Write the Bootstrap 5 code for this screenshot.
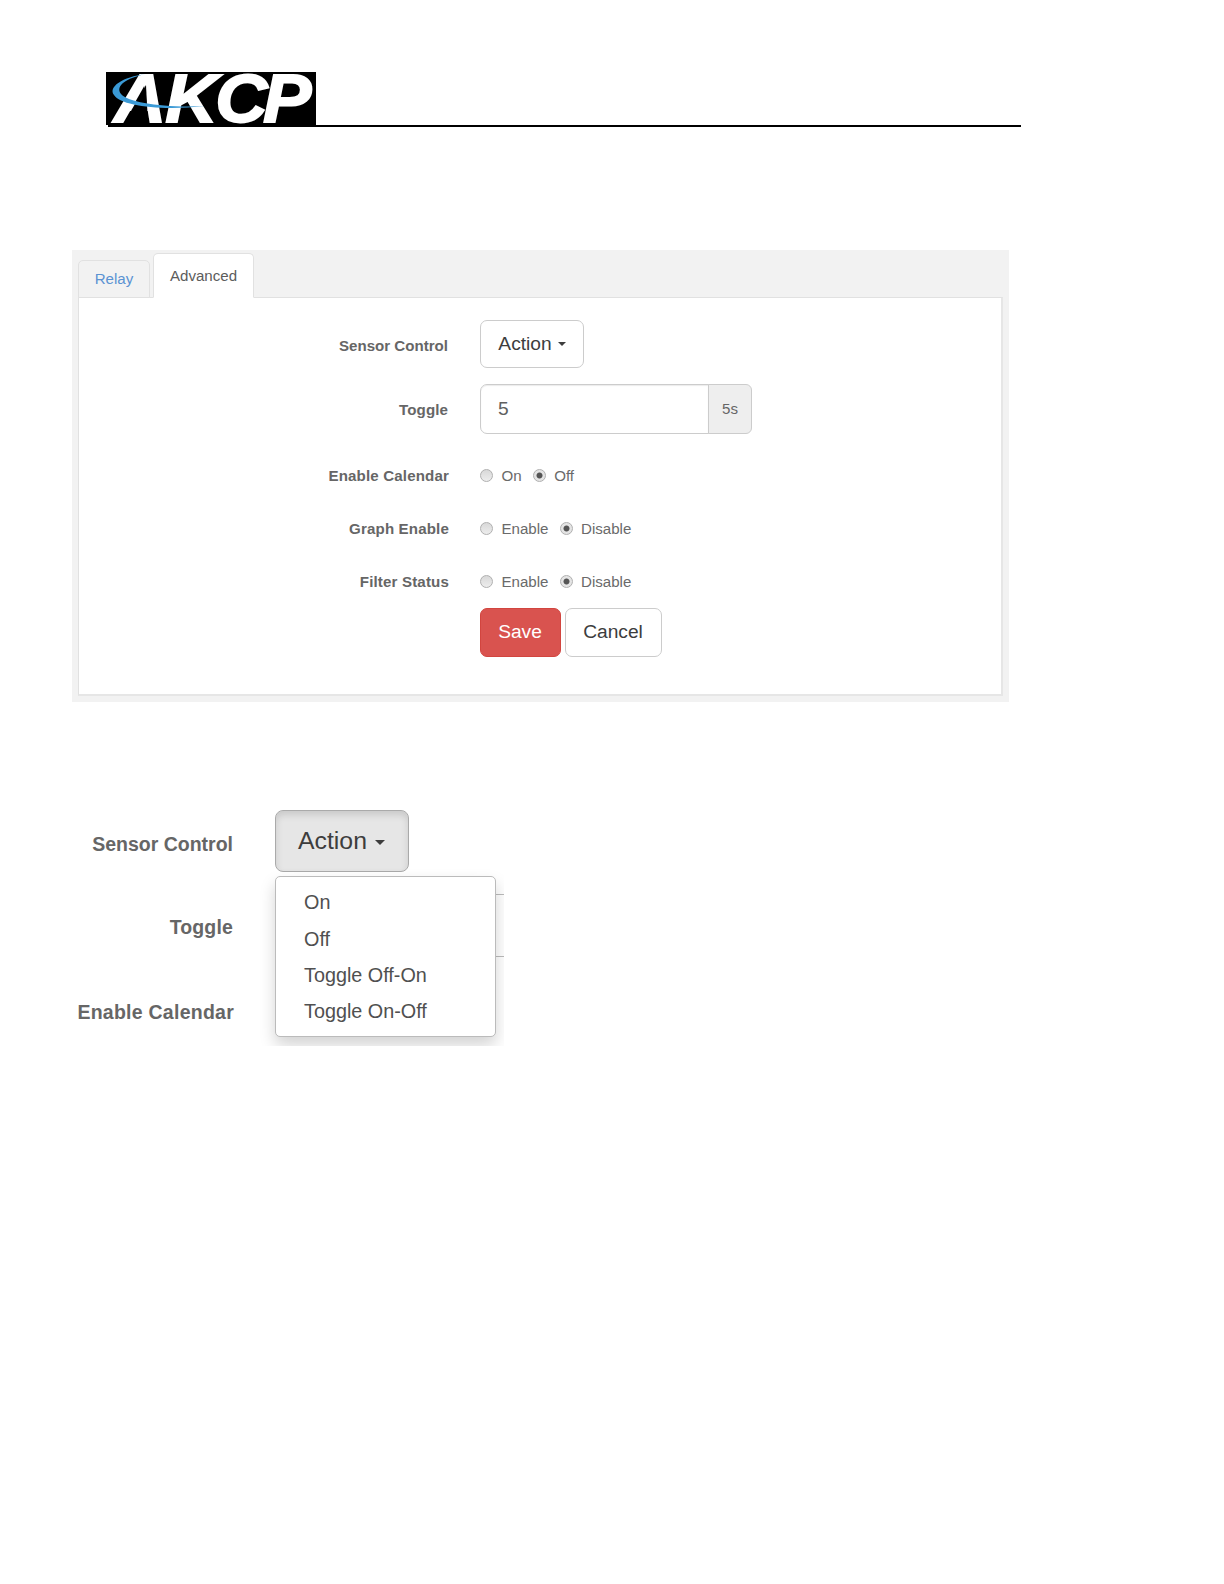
<!DOCTYPE html>
<html lang="en">
<head>
<meta charset="utf-8">
<meta name="viewport" content="width=device-width, initial-scale=1">
<title>AKCP Relay Settings</title>
<link href="https://cdn.jsdelivr.net/npm/bootstrap@5.3.0/dist/css/bootstrap.min.css" rel="stylesheet">
<style>
body{font-family:"Liberation Sans",Arial,sans-serif;font-size:15.1px;line-height:20px;color:#666;background:#fff}
.page{width:1224px;height:1584px;padding:72px 0 0 72px;overflow:hidden}
.brand-bar{width:949px;height:55px;padding-left:34px}
.brand-bar svg{display:block;overflow:visible}
.panel-shot{width:937px;height:452px;margin-top:123px;padding:3px 6px 6px;background:#f2f2f2}
.panel-shot .nav-tabs{height:45px;border:0;position:relative;z-index:1}
.panel-shot .nav-link{border:1px solid #e1e1e1;border-radius:5px 5px 0 0;padding:0;margin:0;text-align:center;color:#5b93d3;background:#f2f2f2;width:72px;height:38px;line-height:36px}
.panel-shot .nav-link.active{width:101px;height:45px;line-height:44px;margin-left:3px;background:#fff;color:#5c5c5c;border-color:#e1e1e1 #e1e1e1 #fff}
.panel-body{height:399px;margin-top:-1px;background:#fff;border:1px solid #e1e1e1;border-right:2px solid #e6e6e6;border-bottom:2px solid #e6e6e6;padding-top:22px}
.field{height:53px}
.field-label{width:369px;margin-right:32px;font-weight:700;text-align:right;flex:none}
.wide-text{letter-spacing:.15px;width:370px;margin-right:31px}
.control-row{height:64px}
.control-row .field-label{padding-top:16px}
.toggle-row{height:65px}
.toggle-row .field-label{padding-top:16px;letter-spacing:.1px}
.btn-big{font-size:19.2px;line-height:25px;border:1px solid #ccc;border-radius:7px;color:#3d3d3d;background:#fff;padding:0 17px 2px;height:48px;display:inline-flex;align-items:center;justify-content:center}
.btn-action{width:104px}
.tri{width:0;height:0;border:4.5px solid transparent;border-top-color:currentColor;border-bottom:0;margin-left:6px;margin-top:2px}
.btn-save{width:81px;height:49px;background:#d9534f;border-color:#d2453f;color:#fff;padding-right:18px}
.btn-cancel{width:97px;height:49px;padding-right:18px}
.toggle-group{width:272px;height:50px}
.toggle-group .form-control{font-size:19.2px;color:#606060;border:1px solid #ccc;border-radius:7px 0 0 7px;padding:0 17px;box-shadow:inset 0 1px 1px rgba(0,0,0,.08)}
.toggle-group .input-group-text{width:44px;padding:0;justify-content:center;font-size:15.1px;color:#666;background:#eee;border:1px solid #ccc;border-radius:0 6px 6px 0}
.opt input{appearance:none;width:13px;height:13px;margin:0 8.5px 0 0;border:1px solid #b0b0b0;border-radius:50%;background:linear-gradient(#d8d8d8,#ededed)}
.opt input:checked{background:radial-gradient(circle,#555 0 2.6px,#e4e4e4 3.4px)}
.opt{color:#6a6a6a}
.opt+.opt{margin-left:11px}
.menu-shot{width:432px;height:246px;margin-top:98px;position:relative;overflow:hidden;font-size:19.5px;line-height:26px}
.menu-shot .field-label{width:161px;margin-right:42px}
.menu-control{height:84px;padding-top:10px}
.menu-control .field-label{padding-top:21px}
.menu-toggle{height:84px}
.menu-shot .menu-toggle .field-label{padding-top:30px;letter-spacing:.15px}
.menu-shot .menu-calendar .field-label{padding-top:31px;width:162px;margin-right:41px;letter-spacing:.25px}
.btn-open{width:134px;height:62px;font-size:24.8px;line-height:32px;border:1px solid #aaa;border-radius:8px;background:#e6e6e6;color:#3d3d3d;box-shadow:inset 0 4px 7px rgba(0,0,0,.125);padding:0 1px 0 0;display:flex;align-items:center;justify-content:center}
.btn-open .tri{border-width:5.5px 5.5px 0;margin-left:8px}
.behind-input{height:63px;margin-top:10px;border:1px solid #bbb;border-right:0;border-radius:4px 0 0 4px;background:#fff}
.behind-radio{width:17px;height:17px;margin-top:35px;border:2px solid #999;border-radius:50%}
.menu-shot .dropdown-menu{left:203px;top:76px;width:221px;min-width:0;height:161px;margin:0;padding:7.4px 0;border:1px solid #bbb;border-radius:5px;box-shadow:0 8px 16px rgba(0,0,0,.175);font-size:19.8px}
.menu-shot .dropdown-item{padding:0 28px;height:36.2px;line-height:36px;color:#505050}
</style>
<script src="https://cdn.jsdelivr.net/npm/bootstrap@5.3.0/dist/js/bootstrap.bundle.min.js"></script>
</head>
<body>
<main class="page">
  <header class="brand-bar">
    <svg width="915" height="55" viewBox="0 0 915 55" role="img" aria-label="AKCP">
      <rect width="210" height="53" fill="#000"/>
      <rect x="2" y="53" width="913" height="2" fill="#000"/>
      <text transform="scale(1.05 1)" x="7.5 56.5 104 149.5" y="50" fill="#fff" stroke="#fff" stroke-width="1.8" font-family="Liberation Sans, Arial, sans-serif" font-size="69" font-weight="700" font-style="italic">AKCP</text>
      <path d="M40 13 L42 52 L19 52 L25.5 38 Z" fill="#000"/>
      <path d="M40 2 C16 5 2 15 8 23 C15 34 55 39 99 34 C59 36 23 31 15 22 C9 14 20 6 40 2Z" fill="#3b9ad6"/>
    </svg>
  </header>

  <section class="panel-shot">
    <ul class="nav nav-tabs align-items-end flex-nowrap">
      <li class="nav-item"><a class="nav-link" href="#">Relay</a></li>
      <li class="nav-item"><a class="nav-link active" href="#">Advanced</a></li>
    </ul>
    <form class="panel-body">
      <div class="d-flex align-items-start control-row">
        <div class="field-label">Sensor Control</div>
        <button type="button" class="btn btn-big btn-action">Action<span class="tri"></span></button>
      </div>
      <div class="d-flex align-items-start toggle-row">
        <div class="field-label">Toggle</div>
        <div class="input-group toggle-group">
          <input class="form-control" type="text" value="5" aria-label="Toggle">
          <span class="input-group-text">5s</span>
        </div>
      </div>
      <div class="d-flex align-items-center field">
        <div class="field-label wide-text">Enable Calendar</div>
        <label class="opt d-flex align-items-center"><input type="radio" name="cal">On</label>
        <label class="opt d-flex align-items-center"><input type="radio" name="cal" checked>Off</label>
      </div>
      <div class="d-flex align-items-center field">
        <div class="field-label wide-text">Graph Enable</div>
        <label class="opt d-flex align-items-center"><input type="radio" name="graph">Enable</label>
        <label class="opt d-flex align-items-center"><input type="radio" name="graph" checked>Disable</label>
      </div>
      <div class="d-flex align-items-center field">
        <div class="field-label wide-text">Filter Status</div>
        <label class="opt d-flex align-items-center"><input type="radio" name="filter">Enable</label>
        <label class="opt d-flex align-items-center"><input type="radio" name="filter" checked>Disable</label>
      </div>
      <div class="d-flex">
        <div class="field-label"></div>
        <div class="d-flex gap-1">
          <button type="button" class="btn btn-big btn-save">Save</button>
          <button type="button" class="btn btn-big btn-cancel">Cancel</button>
        </div>
      </div>
    </form>
  </section>

  <section class="menu-shot">
    <div class="d-flex align-items-start menu-control">
      <div class="field-label">Sensor Control</div>
      <button type="button" class="btn btn-open">Action<span class="tri"></span></button>
    </div>
    <div class="d-flex align-items-start menu-toggle">
      <div class="field-label">Toggle</div>
      <div class="behind-input flex-grow-1"></div>
    </div>
    <div class="d-flex align-items-start menu-calendar">
      <div class="field-label">Enable Calendar</div>
      <div class="behind-radio"></div>
    </div>
    <ul class="dropdown-menu show">
      <li><a class="dropdown-item" href="#">On</a></li>
      <li><a class="dropdown-item" href="#">Off</a></li>
      <li><a class="dropdown-item" href="#">Toggle Off-On</a></li>
      <li><a class="dropdown-item" href="#">Toggle On-Off</a></li>
    </ul>
  </section>
</main>
</body>
</html>
